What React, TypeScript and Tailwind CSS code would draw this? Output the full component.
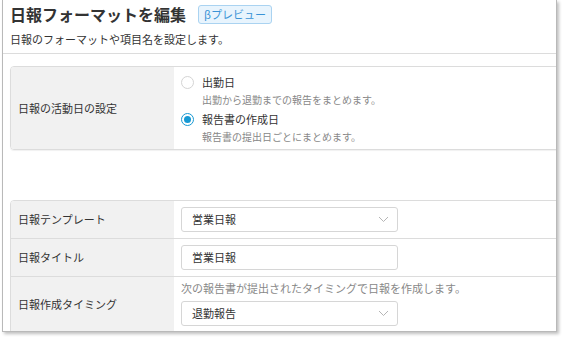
import React from "react";

const font = "font-['Hiragino_Sans','Noto_Sans_CJK_JP',sans-serif]";

function Radio({ checked }: { checked: boolean }) {
  if (checked) {
    return (
      <span className="flex h-[13px] w-[13px] shrink-0 items-center justify-center rounded-full border-[1.5px] border-[#1799d3] bg-white">
        <span className="h-[7px] w-[7px] rounded-full bg-[#1799d3]" />
      </span>
    );
  }
  return <span className="h-[13px] w-[13px] shrink-0 rounded-full border border-[#d4d4d4] bg-white" />;
}

function Chevron() {
  return (
    <svg width="11" height="7" viewBox="0 0 11 7" className="shrink-0">
      <polyline points="1,1 5.5,5.5 10,1" fill="none" stroke="#b5b5b5" strokeWidth="1" />
    </svg>
  );
}

function SelectBox({ value }: { value: string }) {
  return (
    <div className="flex h-[25px] w-[217px] items-center justify-between rounded-[3px] border border-[#d6d6d6] bg-white pl-[10px] pr-[8px]">
      <span className="text-[11px] text-[#333]">{value}</span>
      <Chevron />
    </div>
  );
}

function InputBox({ value }: { value: string }) {
  return (
    <div className="flex h-[25px] w-[217px] items-center rounded-[3px] border border-[#d6d6d6] bg-white pl-[10px]">
      <span className="text-[11px] text-[#333]">{value}</span>
    </div>
  );
}

// options for the activity-day setting
const dayOptions = [
  { label: "出勤日", desc: "出勤から退勤までの報告をまとめます。", checked: false },
  { label: "報告書の作成日", desc: "報告書の提出日ごとにまとめます。", checked: true },
];

export default function App() {
  return (
    <div className={`h-[337px] w-[563px] bg-white ${font}`}>
      <div className="ml-[2px] h-[332px] w-[555px] overflow-hidden border-b border-l border-r border-[#b9b9b9] bg-white shadow-[2px_2px_3px_rgba(0,0,0,0.25)]">
        {/* header */}
        <div className="border-b border-[#dcdcdc] pl-[7px] pt-[4px] pb-[6px]">
          <div className="flex h-[21px] items-center">
            <h1 className="text-[16px] font-bold leading-[21px] text-[#333]">日報フォーマットを編集</h1>
            <span className="ml-[12px] flex h-[19px] items-center rounded-[3px] border border-[#aad3f1] bg-[#e8f4fd] px-[5px] text-[11px] text-[#3a93d6]">
              βプレビュー
            </span>
          </div>
          <p className="mt-[6px] text-[11px] leading-[16px] text-[#333]">日報のフォーマットや項目名を設定します。</p>
        </div>

        {/* activity day card */}
        <div className="ml-[7px] mt-[12px] flex w-[600px] overflow-hidden rounded-l-[4px] border border-[#dcdcdc] shadow-[0_1px_1px_rgba(0,0,0,0.06)]">
          <div className="flex w-[163px] shrink-0 items-center bg-[#f1f1f1] pl-[7px]">
            <span className="text-[11px] text-[#333]">日報の活動日の設定</span>
          </div>
          <div className="flex flex-col gap-[2px] bg-white pl-[7px] pt-[6px] pb-[4px]">
            {dayOptions.map((opt) => (
              <div key={opt.label} className="flex flex-col">
                <div className="flex h-[18px] items-center gap-[8px]">
                  <Radio checked={opt.checked} />
                  <span className="text-[11px] text-[#333]">{opt.label}</span>
                </div>
                <p className="pl-[21px] text-[10px] leading-[17px] text-[#888]">{opt.desc}</p>
              </div>
            ))}
          </div>
        </div>

        {/* settings card */}
        <div className="ml-[7px] mt-[50px] w-[600px] overflow-hidden rounded-tl-[4px] border border-[#dcdcdc]">
          <div className="flex h-[38px] border-b border-[#dcdcdc]">
            <div className="flex w-[163px] shrink-0 items-center bg-[#f1f1f1] pl-[7px]">
              <span className="text-[11px] text-[#333]">日報テンプレート</span>
            </div>
            <div className="flex items-center pl-[7px]">
              <SelectBox value="営業日報" />
            </div>
          </div>
          <div className="flex h-[38px] border-b border-[#dcdcdc]">
            <div className="flex w-[163px] shrink-0 items-center bg-[#f1f1f1] pl-[7px]">
              <span className="text-[11px] text-[#333]">日報タイトル</span>
            </div>
            <div className="flex items-center pl-[7px]">
              <InputBox value="営業日報" />
            </div>
          </div>
          <div className="flex">
            <div className="flex w-[163px] shrink-0 items-center bg-[#f1f1f1] pl-[7px]">
              <span className="text-[11px] text-[#333]">日報作成タイミング</span>
            </div>
            <div className="flex flex-col pl-[7px] pt-[2px] pb-[6px]">
              <p className="text-[11px] leading-[18px] text-[#888]">次の報告書が提出されたタイミングで日報を作成します。</p>
              <div className="mt-[4px]">
                <SelectBox value="退勤報告" />
              </div>
            </div>
          </div>
        </div>
      </div>
    </div>
  );
}
